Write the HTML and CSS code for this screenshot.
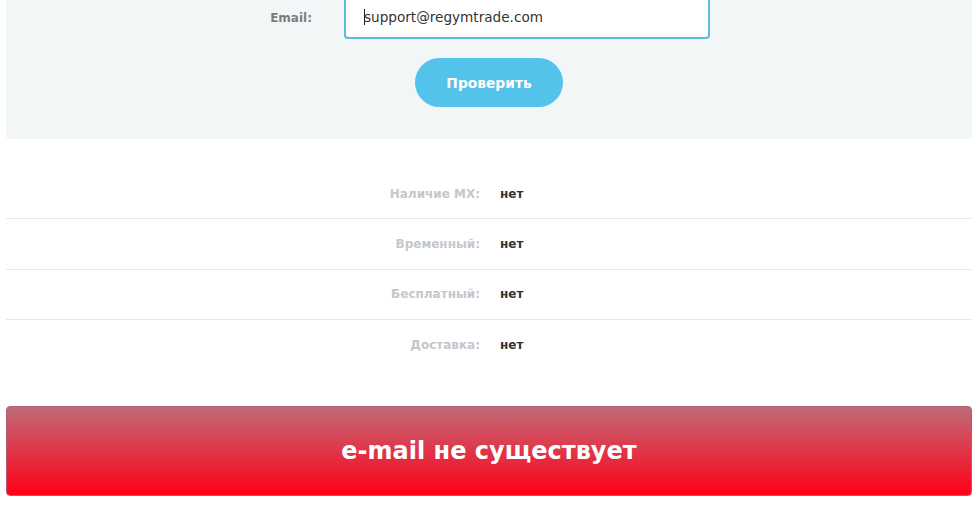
FILE: index.html
```html
<!DOCTYPE html>
<html lang="ru">
<head>
<meta charset="utf-8">
<title>Проверка e-mail</title>
<link rel="stylesheet" href="styles.css">
</head>
<body>
<div class="page">
  <section class="panel">
    <div class="field">
      <label class="field-label" for="email">Email:</label>
      <div class="input" id="email"><span class="caret"></span>support@regymtrade.com</div>
    </div>
    <div class="actions">
      <button class="btn">Проверить</button>
    </div>
  </section>
  <section class="results">
    <div class="row"><span class="key">Наличие MX:</span><span class="val">нет</span></div>
    <div class="row"><span class="key">Временный:</span><span class="val">нет</span></div>
    <div class="row"><span class="key">Бесплатный:</span><span class="val">нет</span></div>
    <div class="row"><span class="key">Доставка:</span><span class="val">нет</span></div>
  </section>
  <div class="banner">e-mail не существует</div>
</div>
</body>
</html>
```
FILE: styles.css
```css
html, body { margin: 0; padding: 0; background: #fff; }
body { font-family: "DejaVu Sans", "Open Sans", sans-serif; }
.page { padding: 0 7px 0 6px; }
.panel {
  background: #f3f6f7;
  margin-top: -6px;
  padding: 0 0 32px;
  border-radius: 0 0 4px 4px;
  display: flex;
  flex-direction: column;
}
.field { display: flex; align-items: center; }
.field-label {
  width: 338px;
  text-align: right;
  font-size: 12px;
  font-weight: 600;
  color: #7d7d7d;
  padding-right: 32px;
  padding-top: 2px;
  box-sizing: border-box;
}
.input {
  width: 366px;
  height: 45px;
  box-sizing: border-box;
  background: #fff;
  border: 2px solid #5bbcd9;
  border-radius: 4px;
  padding: 1px 0 0 18px;
  display: flex;
  align-items: center;
  font-size: 13.6px;
  color: #333;
}
.caret { width: 1px; height: 16px; background: #222; margin-right: -1px; }
.actions { display: flex; justify-content: center; padding-top: 19px; }
.btn {
  width: 148px; height: 49px;
  border: 0; border-radius: 25px;
  background: #53c3eb;
  color: #fff;
  font-family: inherit;
  font-size: 13.8px;
  font-weight: 700;
}
.results { padding: 30px 0 36px; }
.row {
  display: grid;
  grid-template-columns: 474px 1fr;
  column-gap: 20px;
  align-items: center;
  height: 50.5px;
  box-sizing: border-box;
  border-top: 1px solid #e8e8e8;
}
.row:first-child { border-top: 0; height: 49px; }
.key { text-align: right; font-size: 12px; font-weight: 700; color: #c4c7cb; }
.val { font-size: 12px; font-weight: 700; color: #333; }
.banner {
  height: 90px;
  border-radius: 4px;
  border: 1px solid #b0606c;
  box-sizing: border-box;
  background: linear-gradient(#c06b79, #ff0018);
  color: #fff;
  display: flex;
  align-items: center;
  justify-content: center;
  font-size: 24px;
  font-weight: 600;
}
```
